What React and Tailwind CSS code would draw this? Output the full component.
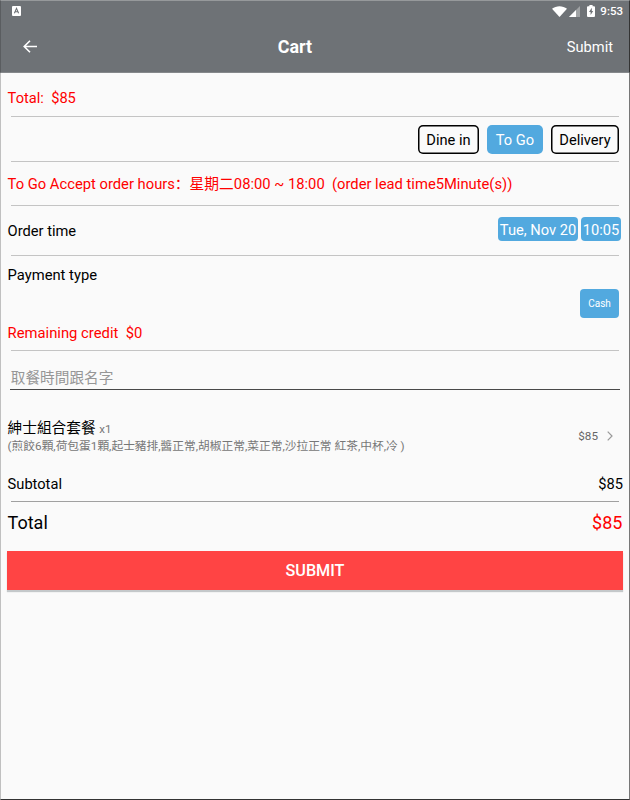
import { clsx } from 'clsx';

const orderTypes = [
  { label: 'Dine in', width: 'w-[61px]' },
  { label: 'To Go', width: 'w-[56px]', active: true },
  { label: 'Delivery', width: 'w-[68px]' },
];

function Divider({ className = 'bg-[#c4c4c4]' }) {
  return <div className={`ml-1 mr-1 h-px shrink-0 ${className}`} />;
}

function StatusBar() {
  return (
    <div className="flex h-[20px] items-center pl-[11px] pr-[6px]">
      <svg width="9" height="10" viewBox="0 0 9 10">
        <rect width="9" height="10" rx="1" fill="#fff" />
        <path d="M2.4 7.2 4.5 2.4 6.6 7.2M3.1 5.7h2.8" fill="none" stroke="#6e7276" strokeWidth="1.1" />
      </svg>
      <div className="ml-auto flex items-center">
        <svg width="15" height="11" viewBox="0 0 15 11">
          <path d="M0 2.8C4.2-.6 10.8-.6 15 2.8L7.5 11z" fill="#fff" />
        </svg>
        <svg className="ml-[2px]" width="11" height="11" viewBox="0 0 11 11">
          <path d="M11 0v11H0z" fill="#fff" opacity=".35" />
          <path d="M7 4v7H0z" fill="#fff" />
        </svg>
        <svg className="ml-[7px]" width="8" height="12" viewBox="0 0 8 12">
          <path d="M2.4 0h3.2v1.2H7a1 1 0 0 1 1 1V11a1 1 0 0 1-1 1H1a1 1 0 0 1-1-1V2.2a1 1 0 0 1 1-1h1.4z" fill="#fff" />
          <path d="M4.8 2.8 2 7h1.6v3L6.2 5.9H4.8z" fill="#6e7276" />
        </svg>
        <span className="ml-[5px] text-[11.5px] font-medium">9:53</span>
      </div>
    </div>
  );
}

function Header() {
  return (
    <header className="-mx-px h-[73px] shrink-0 border border-t-[#96999b] border-r-[#333] border-b-[#85888b] border-l-[#5a5d60] bg-[#6e7276] text-white">
      <StatusBar />
      <div className="grid h-[51px] grid-cols-[238px_68px_1fr] items-center pl-[22px] pr-4">
        <svg width="14" height="13" viewBox="0 0 14 13" fill="none" stroke="#fff" strokeWidth="1.6">
          <path d="M14 6.5H1.5M7 .7 1.2 6.5 7 12.3" />
        </svg>
        <h1 className="text-center text-[17.9px] font-bold">Cart</h1>
        <button className="text-right">Submit</button>
      </div>
    </header>
  );
}

export default function App() {
  return (
    <div className="flex h-[800px] w-[630px] flex-col border-b border-l border-r border-b-[#333] border-l-[#c0c0c0] border-r-[#777] bg-[#fafafa] font-['Roboto','Noto_Sans_CJK_SC',sans-serif] text-[14.67px] leading-[20px] text-black">
      <Header />
      <main className="flex flex-col px-[6px]">
        <p className="h-[43px] whitespace-pre pt-[15px] pl-[0.6px] text-[#f00]">Total:  $85</p>
        <Divider />
        <div className="flex h-[44px] items-start justify-end gap-2 pt-2 pr-1">
          {orderTypes.map(({ label, width, active }) => (
            <button
              key={label}
              className={clsx(
                'h-[29px] rounded-[5px]',
                width,
                active ? 'bg-[#52a9df] text-white' : 'shadow-[inset_0_0_0_1.5px_#000]'
              )}
            >
              {label}
            </button>
          ))}
        </div>
        <Divider />
        <p className="h-[43px] whitespace-pre pt-[12px] pl-[0.6px] text-[14.75px] text-[#f00]">
          To Go Accept order hours：星期二08:00 ~ 18:00  (order lead time5Minute(s))
        </p>
        <Divider />
        <div className="flex h-[49px] items-start pr-[2px] pl-[0.6px]">
          <span className="pt-[15px]">Order time</span>
          <div className="ml-auto flex gap-[3px] pt-[11px] text-white">
            <span className="h-[24px] w-[80px] rounded-[4px] bg-[#52a9df] text-center leading-[26px]">Tue, Nov 20</span>
            <span className="h-[24px] w-[40px] rounded-[4px] bg-[#52a9df] text-center leading-[26px]">10:05</span>
          </div>
        </div>
        <Divider />
        <p className="h-[33px] pt-[9px] pl-[0.6px] text-[14.75px]">Payment type</p>
        <button className="mr-1 h-[29px] w-[39px] self-end rounded-[4px] bg-[#52a9df] text-[10px] text-white">Cash</button>
        <p className="h-[32px] whitespace-pre pt-[5px] pl-[0.6px] text-[14.8px] text-[#f00]">Remaining credit  $0</p>
        <Divider />
        <input
          className="mx-[3px] h-[39px] border-b border-[#484848] pt-[16px] pl-[0.8px] placeholder:text-[#969696] outline-none"
          placeholder="取餐時間跟名字"
        />
        <div className="flex h-[84px] items-center pt-[8px] pl-[0.6px]">
          <div className="pb-px">
            <p>
              紳士組合套餐 <span className="text-[11.5px] text-[#777]">x1</span>
            </p>
            <p className="text-[11.73px] leading-[15px] text-[#777]">
              (煎餃6顆,荷包蛋1顆,起士豬排,醬正常,胡椒正常,菜正常,沙拉正常 紅茶,中杯,冷 )
            </p>
          </div>
          <span className="ml-auto text-[11.7px] text-[#666]">$85</span>
          <svg className="ml-[9px] mr-[10px]" width="6" height="10" viewBox="0 0 6 10" fill="none" stroke="#999" strokeWidth="1.2">
            <path d="M.7.7 5 5 .7 9.3" />
          </svg>
        </div>
        <div className="flex h-[27px] justify-between pl-[0.6px]">
          <span>Subtotal</span>
          <span>$85</span>
        </div>
        <Divider className="bg-[#a0a0a0]" />
        <div className="flex h-[49px] justify-between pt-[11px] pr-[0.6px] pl-[0.6px] text-[18px]">
          <span>Total</span>
          <span className="text-[#f00]">$85</span>
        </div>
        <button className="h-[39px] bg-[#ff4444] text-[16.2px] font-medium text-white shadow-[0_2px_1px_#c4c8ca]">SUBMIT</button>
      </main>
    </div>
  );
}
